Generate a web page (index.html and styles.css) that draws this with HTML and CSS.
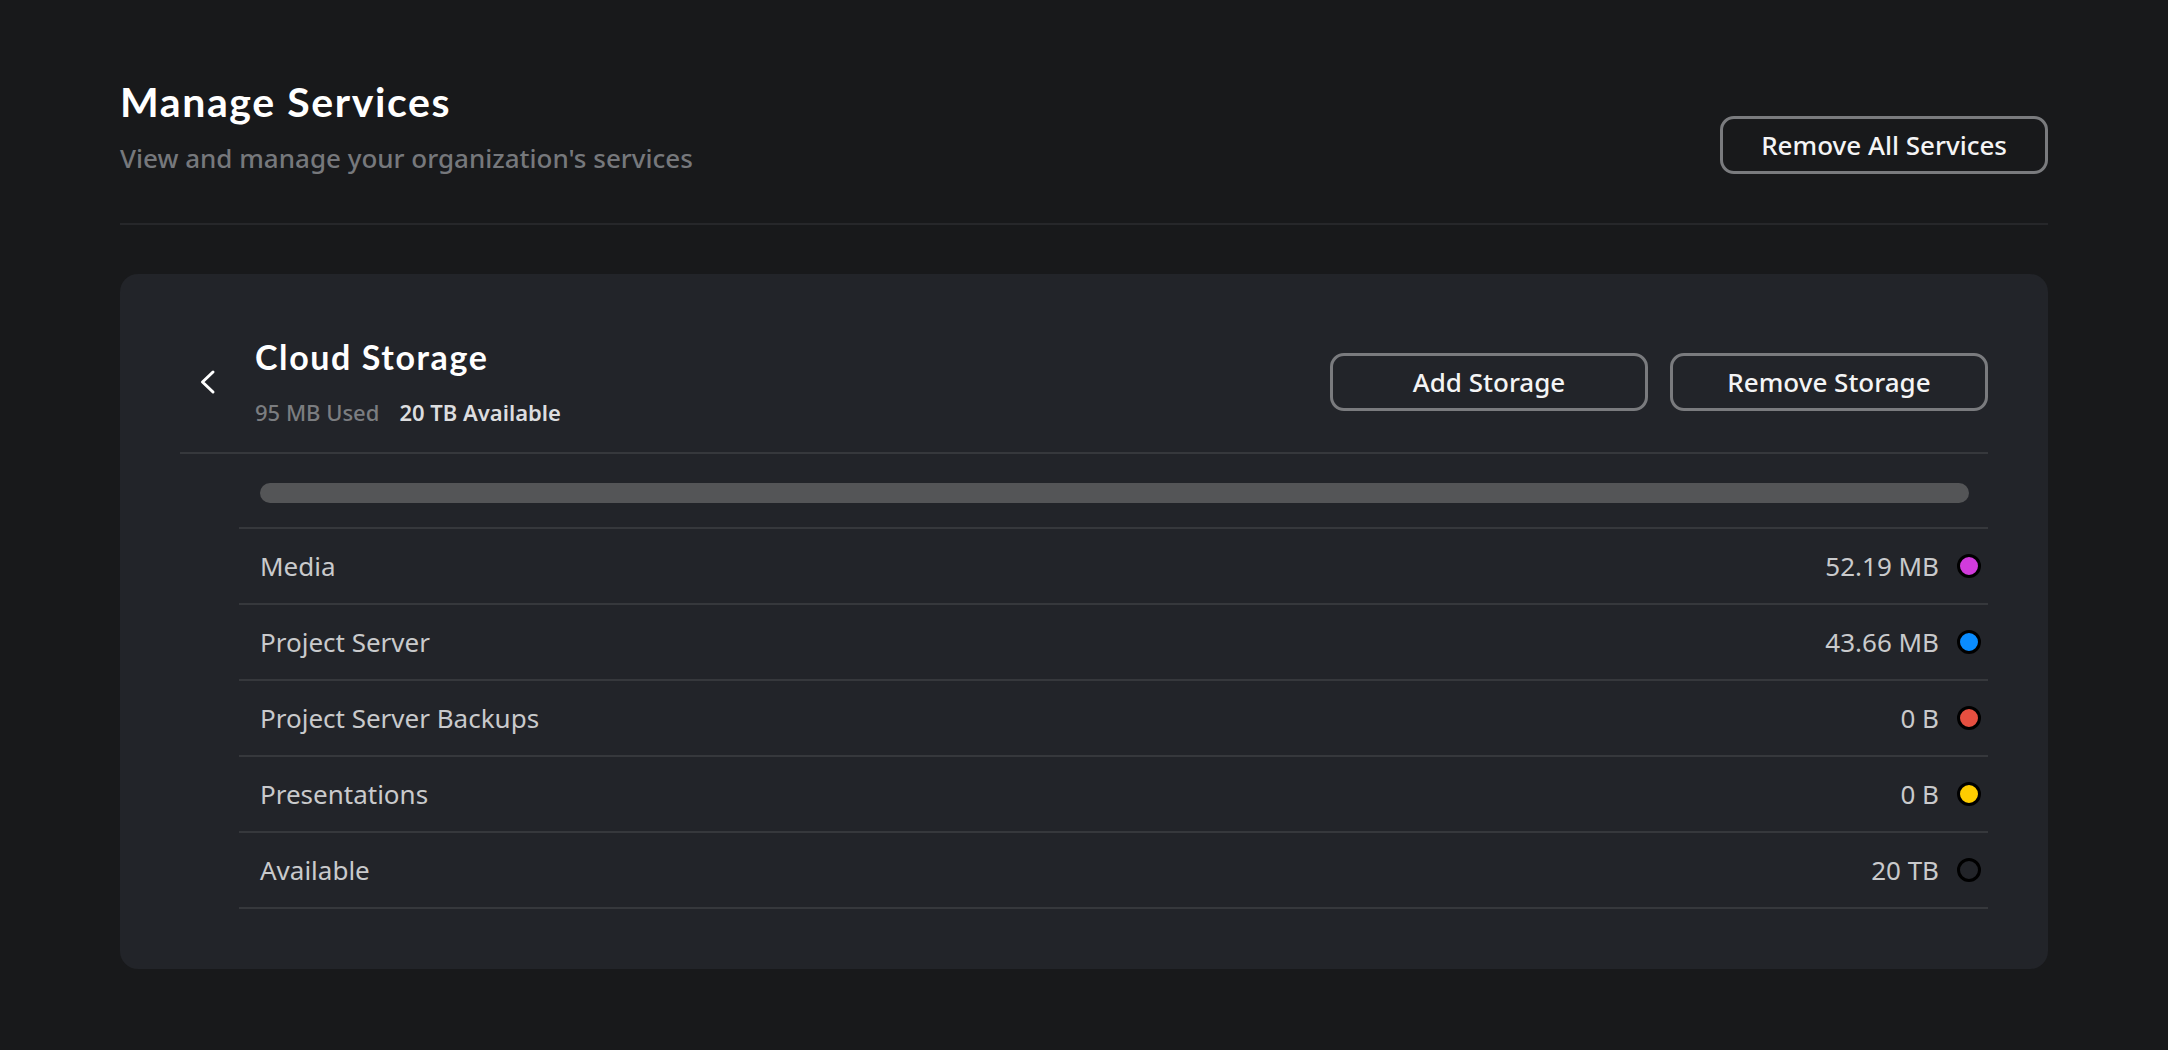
FILE: index.html
```html
<!DOCTYPE html>
<html lang="en">
<head>
  <meta charset="UTF-8" />
  <meta name="viewport" content="width=device-width, initial-scale=1" />
  <title>Manage Services</title>
  <link rel="stylesheet" href="styles.css">
</head>
<body>
  <main class="page">
    <header class="page-header">
      <div>
        <h1>Manage Services</h1>
        <p class="subtitle">View and manage your organization's services</p>
      </div>
      <button class="btn" type="button">Remove All Services</button>
    </header>

    <section class="card" aria-labelledby="storage-title">
      <div class="card-header">
        <button class="back" type="button" aria-label="Back">
          <svg width="18" height="26" viewBox="0 0 18 26" aria-hidden="true">
            <polyline points="14,3 3.5,13 14,23" fill="none" stroke="#fff" stroke-width="3" stroke-linecap="round" stroke-linejoin="round" />
          </svg>
        </button>
        <div class="card-title">
          <h2 id="storage-title">Cloud Storage</h2>
          <p class="usage"><span class="used">95 MB Used</span><span class="avail">20 TB Available</span></p>
        </div>
        <div class="actions">
          <button class="btn btn-wide" type="button">Add Storage</button>
          <button class="btn btn-wide" type="button">Remove Storage</button>
        </div>
      </div>

      <div class="card-body">
        <div class="meter"><div class="meter-bar"></div></div>
        <ul class="rows">
          <li class="row"><span>Media</span><span class="value">52.19 MB<i class="dot dot-media"></i></span></li>
          <li class="row"><span>Project Server</span><span class="value">43.66 MB<i class="dot dot-server"></i></span></li>
          <li class="row"><span>Project Server Backups</span><span class="value">0 B<i class="dot dot-backups"></i></span></li>
          <li class="row"><span>Presentations</span><span class="value">0 B<i class="dot dot-slides"></i></span></li>
          <li class="row"><span>Available</span><span class="value">20 TB<i class="dot"></i></span></li>
        </ul>
      </div>
    </section>
  </main>
</body>
</html>
```

FILE: styles.css
```css
:root{
  --bg:#18191b;
  --card:#222429;
  --line:#36383c;
  --text:#c9cacc;
  --muted:#76787c;
  --heading:"Lato", "Noto Sans", sans-serif;
  --body:"Noto Sans", "Open Sans", sans-serif;
}

* { box-sizing: border-box; }
body{
  margin:0; background:var(--bg); color:var(--text);
  font-family: var(--body);
}

.page{ padding: 78px 120px 80px; }

/* Page header */
.page-header{
  display:flex; justify-content:space-between; align-items:flex-end;
  padding-bottom: 49px; border-bottom: 2px solid #26272a;
}
h1{
  font-family: var(--heading); font-weight:700; font-size:41px; line-height:48px;
  color:#fff; margin:0; letter-spacing:1.6px;
}
.subtitle{ margin:16px 0 0; font-size:26px; line-height:32px; font-weight:500; color:var(--muted); }

.btn{
  appearance:none; background:transparent; cursor:pointer;
  border:3px solid #7a7b7e; border-radius:14px;
  color:#f4f4f5; font-family:var(--body); font-size:26px; font-weight:500;
  height:58px; padding:0 38px;
}
.btn-wide{ width:318px; padding:0; }

/* Card */
.card{
  margin-top:49px; background:var(--card); border-radius:18px;
  padding:63px 60px 60px;
}
.card-header{
  display:flex; align-items:center;
  padding: 0 0 25px 19px; border-bottom:2px solid var(--line);
}
.back{
  appearance:none; background:none; border:0; padding:0; margin:0 38px 0 0;
  display:flex; cursor:pointer;
}
.card-title{ flex:1; }
h2{
  font-family: var(--heading); font-weight:700; font-size:34px; line-height:40px;
  color:#fff; margin:0; letter-spacing:1.6px;
}
.usage{ margin:20px 0 0; font-size:22px; line-height:30px; display:flex; gap:20px; }
.used{ color:#7b7d80; font-weight:500; }
.avail{ color:#dcdddf; font-weight:600; }
.actions{ display:flex; gap:22px; }

.card-body{ padding-left:59px; }
.meter{ padding:29px 19px 24px 21px; }
.meter-bar{ height:20px; border-radius:10px; background:#545557; }

.rows{ list-style:none; margin:0; padding:0; border-top:2px solid var(--line); }
.row{
  display:flex; justify-content:space-between; align-items:center;
  height:76px; padding:0 7px 0 21px; border-bottom:2px solid var(--line);
  font-size:26px;
}
.value{ display:flex; align-items:center; gap:18px; }
.dot{
  width:24px; height:24px; border-radius:50%;
  border:3px solid #000; background:transparent;
}
.dot-media{ background:#d13bdc; }
.dot-server{ background:#0a8cff; }
.dot-backups{ background:#e64f40; }
.dot-slides{ background:#ffcd00; }
```
